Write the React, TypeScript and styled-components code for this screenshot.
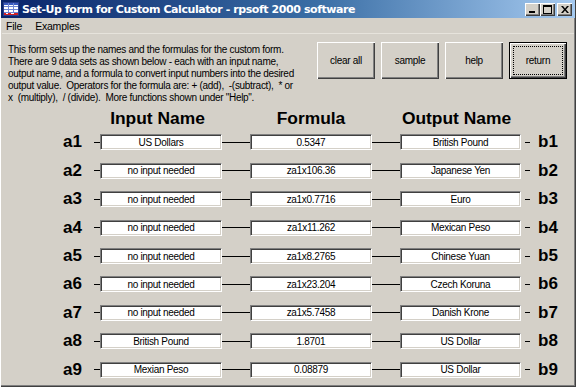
import React from "react";
import styled, { createGlobalStyle } from "styled-components";

const GlobalStyle = createGlobalStyle`
  html, body {
    margin: 0;
    padding: 0;
    background: #d4d0c8;
  }
  * {
    box-sizing: border-box;
  }
`;

interface DataSet {
  input: string;
  formula: string;
  output: string;
}

const dataSets: DataSet[] = [
  { input: "US Dollars", formula: "0.5347", output: "British Pound" },
  { input: "no input needed", formula: "za1x106.36", output: "Japanese Yen" },
  { input: "no input needed", formula: "za1x0.7716", output: "Euro" },
  { input: "no input needed", formula: "za1x11.262", output: "Mexican Peso" },
  { input: "no input needed", formula: "za1x8.2765", output: "Chinese Yuan" },
  { input: "no input needed", formula: "za1x23.204", output: "Czech Koruna" },
  { input: "no input needed", formula: "za1x5.7458", output: "Danish Krone" },
  { input: "British Pound", formula: "1.8701", output: "US Dollar" },
  { input: "Mexian Peso", formula: "0.08879", output: "US Dollar" },
];

const description = [
  "This form sets up the names and the formulas for the custom form.",
  "There are 9 data sets as shown below - each with an input name,",
  "output name, and a formula to convert input numbers into the desired",
  "output value.  Operators for the formula are: + (add),  -(subtract),  * or",
  'x  (multiply),  / (divide).  More functions shown under "Help".',
];

const buttons = ["clear all", "sample", "help", "return"];

const AppIcon = () => (
  <svg width="16" height="16" viewBox="0 0 16 16">
    <rect x="0.5" y="1.5" width="15" height="13" fill="#fff" stroke="#2a3f8f" />
    <rect x="1" y="2" width="14" height="2" fill="#3a5bc0" />
    {[5, 8, 11].map((y) => (
      <line key={y} x1="1" y1={y + 0.5} x2="15" y2={y + 0.5} stroke="#6f86d6" />
    ))}
    {[5, 10].map((x) => (
      <line key={x} x1={x + 0.5} y1="2" x2={x + 0.5} y2="13" stroke="#6f86d6" />
    ))}
    <rect x="1" y="12" width="14" height="2" fill="#d42020" />
    <rect x="3" y="12" width="2" height="1" fill="#fff" />
    <rect x="8" y="12" width="3" height="1" fill="#fff" />
  </svg>
);

const MinGlyph = () => (
  <svg width="8" height="7" viewBox="0 0 8 7">
    <rect x="0" y="5" width="6" height="2" fill="#000" />
  </svg>
);

const MaxGlyph = () => (
  <svg width="9" height="9" viewBox="0 0 9 9">
    <rect x="0.5" y="0.5" width="8" height="8" fill="none" stroke="#000" />
    <rect x="0" y="0" width="9" height="2" fill="#000" />
  </svg>
);

const CloseGlyph = () => (
  <svg width="8" height="7" viewBox="0 0 8 7">
    <path d="M0 0h2l2 2.5L6 0h2L5 3.5L8 7H6L4 4.5L2 7H0l3-3.5z" fill="#000" />
  </svg>
);

const App: React.FC = () => {
  return (
    <>
      <GlobalStyle />
      <Window>
        <TitleBar>
          <AppIcon />
          <Title>Set-Up form for Custom Calculator - rpsoft 2000 software</Title>
          <CaptionButtons>
            <CaptionButton>
              <MinGlyph />
            </CaptionButton>
            <CaptionButton>
              <MaxGlyph />
            </CaptionButton>
            <CaptionButton $spaced>
              <CloseGlyph />
            </CaptionButton>
          </CaptionButtons>
        </TitleBar>
        <MenuBar>
          <MenuItem>File</MenuItem>
          <MenuItem>Examples</MenuItem>
        </MenuBar>
        <Body>
          <TopSection>
            <Description>
              {description.map((line) => (
                <DescLine key={line}>{line}</DescLine>
              ))}
            </Description>
            <ButtonRow>
              {buttons.map((b) => (
                <PushButton key={b} $isDefault={b === "return"}>
                  {b === "return" ? <FocusRect>{b}</FocusRect> : b}
                </PushButton>
              ))}
            </ButtonRow>
          </TopSection>
          <HeaderRow>
            <ColumnHeading $w={122} $shift={7}>
              Input Name
            </ColumnHeading>
            <ColumnHeading $w={122} $shift={0}>
              Formula
            </ColumnHeading>
            <ColumnHeading $w={121} $shift={8}>
              Output Name
            </ColumnHeading>
          </HeaderRow>
          {dataSets.map((set, i) => (
            <Row key={i}>
              <SetLabel $side="a">a{i + 1}</SetLabel>
              <Wire $w={6} />
              <Field $w={122}>{set.input}</Field>
              <Wire $w={28} />
              <Field $w={122}>{set.formula}</Field>
              <Wire $w={28} />
              <Field $w={121}>{set.output}</Field>
              <Wire $w={5} $before={4} $after={8} />
              <SetLabel $side="b">b{i + 1}</SetLabel>
            </Row>
          ))}
        </Body>
      </Window>
    </>
  );
};

const Window = styled.div`
  width: 576px;
  height: 387px;
  display: flex;
  flex-direction: column;
  background: #d4d0c8;
  padding: 0 2px 2px 2px;
  box-shadow: inset 1px 0 #ffffff, inset -1px -1px #404040, inset -2px -2px #808080;
  overflow: hidden;
`;

const TitleBar = styled.div`
  height: 18px;
  margin: 0 -1px;
  display: flex;
  align-items: center;
  padding-left: 2px;
  background: linear-gradient(to right, #0a246a 0%, #3a6ea5 55%, #a6caf0 100%);
`;

const Title = styled.span`
  margin-left: 3px;
  flex: 1;
  color: #ffffff;
  font-family: "DejaVu Sans", "Liberation Sans", sans-serif;
  font-weight: bold;
  font-size: 11px;
  letter-spacing: -0.42px;
  white-space: nowrap;
`;

const CaptionButtons = styled.div`
  display: flex;
  align-items: center;
  padding-right: 3px;
`;

const CaptionButton = styled.div<{ $spaced?: boolean }>`
  width: 15px;
  height: 13px;
  margin-left: ${(p) => (p.$spaced ? "2px" : "0")};
  background: #d4d0c8;
  display: flex;
  align-items: center;
  justify-content: center;
  box-shadow: inset 1px 1px #ffffff, inset -1px -1px #404040, inset -2px -2px #808080;
`;

const MenuBar = styled.div`
  height: 16px;
  display: flex;
  align-items: center;
  padding-left: 4px;
  gap: 13px;
  border-bottom: 1px solid #e6e3dc;
`;

const MenuItem = styled.span`
  font-family: "Liberation Sans", Arial, sans-serif;
  font-size: 10.5px;
  letter-spacing: -0.2px;
  color: #000;
`;

const Body = styled.div`
  display: flex;
  flex-direction: column;
`;

const TopSection = styled.div`
  height: 73px;
  display: flex;
  justify-content: space-between;
`;

const Description = styled.div`
  margin: 10px 0 0 6px;
  font-family: "Liberation Sans", Arial, sans-serif;
  font-size: 10px;
  letter-spacing: -0.3px;
  line-height: 12px;
  color: #000;
`;

const DescLine = styled.div`
  white-space: pre;
`;

const ButtonRow = styled.div`
  display: flex;
  gap: 6px;
  margin: 8px 7px 0 0;
`;

const PushButton = styled.div<{ $isDefault?: boolean }>`
  width: 58px;
  height: 37px;
  display: flex;
  align-items: center;
  justify-content: center;
  background: #d4d0c8;
  font-family: "Liberation Sans", Arial, sans-serif;
  font-size: 10px;
  letter-spacing: -0.3px;
  color: #000;
  border: ${(p) => (p.$isDefault ? "1px solid #000" : "none")};
  box-shadow: inset 1px 1px #ffffff, inset -1px -1px #404040, inset -2px -2px #808080;
  padding: 3px;
`;

const FocusRect = styled.div`
  width: 100%;
  height: 100%;
  border: 1px dotted #000;
  display: flex;
  align-items: center;
  justify-content: center;
`;

const HeaderRow = styled.div`
  height: 21.3px;
  display: flex;
  align-items: center;
  gap: 28px;
  padding-left: 98px;
`;

const ColumnHeading = styled.div<{ $w: number; $shift: number }>`
  width: ${(p) => p.$w}px;
  padding-right: ${(p) => p.$shift}px;
  text-align: center;
  font-family: "Liberation Sans", Arial, sans-serif;
  font-weight: bold;
  font-size: 17.4px;
  line-height: 20px;
  color: #000;
  white-space: nowrap;
`;

const Row = styled.div`
  height: 28.4px;
  display: flex;
  align-items: center;
`;

const SetLabel = styled.div<{ $side: "a" | "b" }>`
  width: ${(p) => (p.$side === "a" ? "80px" : "auto")};
  margin-right: ${(p) => (p.$side === "a" ? "12px" : "0")};
  text-align: ${(p) => (p.$side === "a" ? "right" : "left")};
  font-family: "Liberation Sans", Arial, sans-serif;
  font-weight: bold;
  font-size: 17px;
  line-height: 20px;
  color: #000;
`;

const Wire = styled.div<{ $w: number; $before?: number; $after?: number }>`
  flex: none;
  width: ${(p) => p.$w}px;
  height: 1px;
  margin-left: ${(p) => p.$before ?? 0}px;
  margin-right: ${(p) => p.$after ?? 0}px;
  background: #000;
`;

const Field = styled.div<{ $w: number }>`
  flex: none;
  width: ${(p) => p.$w}px;
  height: 16px;
  display: flex;
  align-items: center;
  justify-content: center;
  background: #ffffff;
  border-top: 1px solid #808080;
  border-left: 1px solid #808080;
  border-right: 1px solid #ffffff;
  border-bottom: 1px solid #ffffff;
  box-shadow: inset 1px 1px #404040, inset -1px -1px #d4d0c8;
  font-family: "Liberation Sans", Arial, sans-serif;
  font-size: 10px;
  letter-spacing: -0.3px;
  color: #000;
  white-space: nowrap;
  overflow: hidden;
`;

export default App;
